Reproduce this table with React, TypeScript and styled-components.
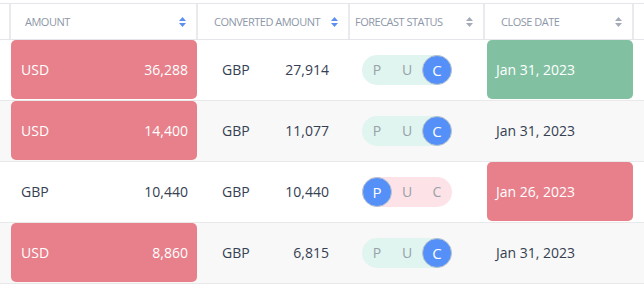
import React from "react";
import styled, { createGlobalStyle } from "styled-components";

const GlobalStyle = createGlobalStyle`
  body {
    margin: 0;
    background: #ffffff;
    font-family: "Open Sans", "Liberation Sans", sans-serif;
  }
`;

const COLS = "9px 189px 152px 135px 149px 10px";

const Page = styled.div`
  width: 644px;
  height: 296px;
  padding-top: 3px;
  box-sizing: border-box;
  overflow: hidden;
`;

const HeaderRow = styled.div`
  display: grid;
  grid-template-columns: ${COLS};
  height: 37px;
  border-top: 1px solid #e4e6ea;
  border-bottom: 1px solid #e4e6ea;
  box-sizing: border-box;
  background: #fff;
`;

const HeadCell = styled.div<{ $pad?: number }>`
  display: flex;
  align-items: center;
  justify-content: space-between;
  padding: 0 9px 0 ${(p) => p.$pad ?? 16}px;
  border-right: 2px solid #e8eaed;
  font-size: 11px;
  letter-spacing: -0.5px;
  color: #8e97a8;
  text-transform: uppercase;
  white-space: nowrap;
  &:last-child {
    border-right: none;
  }
`;

const Row = styled.div<{ $alt?: boolean }>`
  display: grid;
  grid-template-columns: ${COLS};
  height: 61px;
  border-bottom: 1px solid #e9e9e9;
  box-sizing: border-box;
  background: ${(p) => (p.$alt ? "#f8f8f8" : "#ffffff")};
`;

const Cell = styled.div`
  display: flex;
  padding: 0 1px 1px 2px;
  box-sizing: border-box;
`;

const Money = styled.div<{ $tone?: string }>`
  flex: 1;
  display: flex;
  align-items: center;
  justify-content: space-between;
  padding: 0 9px 0 10px;
  border-radius: 5px;
  background: ${(p) => p.$tone ?? "transparent"};
  color: ${(p) => (p.$tone ? "#ffffff" : "#354052")};
  font-size: 14px;
`;

const Converted = styled.div`
  flex: 1;
  display: flex;
  align-items: center;
  justify-content: space-between;
  padding: 0 20px 0 22px;
  color: #354052;
  font-size: 14px;
`;

const Pill = styled.div<{ $tint: string }>`
  margin-left: 10px;
  align-self: center;
  display: flex;
  height: 30px;
  width: 90px;
  border-radius: 15px;
  background: ${(p) => p.$tint};
`;

const Slot = styled.div<{ $on?: boolean }>`
  width: 30px;
  height: 30px;
  box-sizing: border-box;
  display: flex;
  align-items: center;
  justify-content: center;
  border-radius: 50%;
  font-size: ${(p) => (p.$on ? 15 : 14)}px;
  color: ${(p) => (p.$on ? "#ffffff" : "#97a2a8")};
  background: ${(p) => (p.$on ? "#5590f8" : "transparent")};
  border: ${(p) => (p.$on ? "1px solid #b9c3cf" : "none")};
`;

const DateBox = styled.div<{ $tone?: string }>`
  flex: 1;
  display: flex;
  align-items: center;
  padding-left: 9px;
  border-radius: 5px;
  background: ${(p) => p.$tone ?? "transparent"};
  color: ${(p) => (p.$tone ? "#ffffff" : "#354052")};
  font-size: 14px;
`;

const SortIcon = ({ active }: { active?: boolean }) => (
  <svg width="9" height="12" viewBox="0 0 9 12">
    <path d="M4.5 1 L8 5 L1 5 Z" fill={active ? "#5b8ff0" : "#a3abb8"} />
    <path d="M4.5 11 L8 7 L1 7 Z" fill={active ? "#5b8ff0" : "#a3abb8"} />
  </svg>
);

const RED = "#e7808b";
const GREEN = "#81c1a2";
const MINT = "#e0f5ef";
const PINK = "#fde3e7";

type Status = "P" | "U" | "C";

const rows: {
  cur: string;
  amount: string;
  conv: string;
  amountRed: boolean;
  status: Status;
  date: string;
  dateTone?: string;
}[] = [
  { cur: "USD", amount: "36,288", conv: "27,914", amountRed: true, status: "C", date: "Jan 31, 2023", dateTone: GREEN },
  { cur: "USD", amount: "14,400", conv: "11,077", amountRed: true, status: "C", date: "Jan 31, 2023" },
  { cur: "GBP", amount: "10,440", conv: "10,440", amountRed: false, status: "P", date: "Jan 26, 2023", dateTone: RED },
  { cur: "USD", amount: "8,860", conv: "6,815", amountRed: true, status: "C", date: "Jan 31, 2023" },
];

export default function App() {
  return (
    <>
      <GlobalStyle />
      <Page>
        <HeaderRow>
          <HeadCell $pad={0} />
          <HeadCell>
            Amount
            <SortIcon active />
          </HeadCell>
          <HeadCell>
            Converted Amount
            <SortIcon active />
          </HeadCell>
          <HeadCell $pad={5}>
            Forecast Status
            <SortIcon />
          </HeadCell>
          <HeadCell $pad={16}>
            Close Date
            <SortIcon />
          </HeadCell>
          <HeadCell $pad={0} />
        </HeaderRow>
        {rows.map((r, i) => (
          <Row key={i} $alt={i % 2 === 1}>
            <div />
            <Cell>
              <Money $tone={r.amountRed ? RED : undefined}>
                <span>{r.cur}</span>
                <span>{r.amount}</span>
              </Money>
            </Cell>
            <Cell>
              <Converted>
                <span>GBP</span>
                <span>{r.conv}</span>
              </Converted>
            </Cell>
            <Cell>
              <Pill $tint={r.status === "P" ? PINK : MINT}>
                {(["P", "U", "C"] as Status[]).map((s) => (
                  <Slot key={s} $on={s === r.status}>
                    {s}
                  </Slot>
                ))}
              </Pill>
            </Cell>
            <Cell>
              <DateBox $tone={r.dateTone}>{r.date}</DateBox>
            </Cell>
            <div />
          </Row>
        ))}
      </Page>
    </>
  );
}
